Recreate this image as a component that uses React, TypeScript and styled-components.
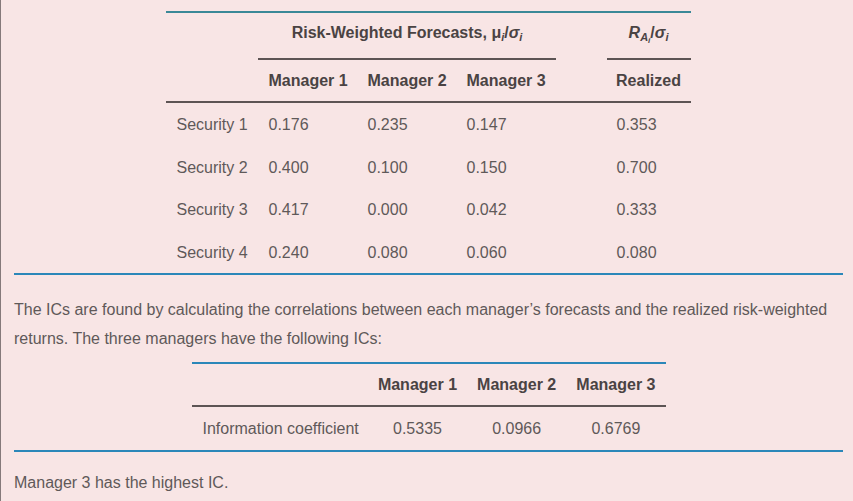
import styled, { createGlobalStyle } from "styled-components";

const GlobalStyle = createGlobalStyle`
  html, body {
    margin: 0;
    padding: 0;
    background: #f8e5e5;
  }
`;

const forecasts = [
  { label: "Security 1", values: ["0.176", "0.235", "0.147"], realized: "0.353" },
  { label: "Security 2", values: ["0.400", "0.100", "0.150"], realized: "0.700" },
  { label: "Security 3", values: ["0.417", "0.000", "0.042"], realized: "0.333" },
  { label: "Security 4", values: ["0.240", "0.080", "0.060"], realized: "0.080" },
];

const managers = ["Manager 1", "Manager 2", "Manager 3"];
const ics = ["0.5335", "0.0966", "0.6769"];

const App = () => {
  return (
    <Page>
      <GlobalStyle />
      <DataTable $width={524} $top="#3b8897">
        <colgroup>
          <col style={{ width: 92 }} />
          <col style={{ width: 99 }} />
          <col style={{ width: 99 }} />
          <col style={{ width: 99 }} />
          <col style={{ width: 51 }} />
          <col style={{ width: 84 }} />
        </colgroup>
        <thead>
          <tr>
            <GroupHead />
            <GroupHead colSpan={3} $underline>
              Risk-Weighted Forecasts, μ<Sub>i</Sub>/<Greek>σ</Greek>
              <Sub>i</Sub>
            </GroupHead>
            <GroupHead />
            <GroupHead $underline>
              <Greek>R</Greek>
              <Sub>
                A<SubSub>i</SubSub>
              </Sub>
              /<Greek>σ</Greek>
              <Sub>i</Sub>
            </GroupHead>
          </tr>
          <tr>
            <ColHead />
            {managers.map((m) => (
              <ColHead key={m}>{m}</ColHead>
            ))}
            <ColHead />
            <ColHead $center>Realized</ColHead>
          </tr>
        </thead>
        <tbody>
          {forecasts.map((row) => (
            <tr key={row.label}>
              <Cell>{row.label}</Cell>
              {row.values.map((v, i) => (
                <Cell key={i}>{v}</Cell>
              ))}
              <Cell />
              <Cell>{row.realized}</Cell>
            </tr>
          ))}
        </tbody>
      </DataTable>
      <Rule />
      <Para $top={20} $bottom={9}>
        The ICs are found by calculating the correlations between each manager’s forecasts
        and the realized risk-weighted returns. The three managers have the following ICs:
      </Para>
      <DataTable $width={474} $top="#2b87b9">
        <colgroup>
          <col style={{ width: 176 }} />
          <col style={{ width: 99 }} />
          <col style={{ width: 99 }} />
          <col style={{ width: 99 }} />
        </colgroup>
        <thead>
          <tr>
            <ColHead />
            {managers.map((m) => (
              <ColHead key={m} $center>
                {m}
              </ColHead>
            ))}
          </tr>
        </thead>
        <tbody>
          <tr>
            <Cell $padLeft={11}>Information coefficient</Cell>
            {ics.map((v) => (
              <Cell key={v} $center>
                {v}
              </Cell>
            ))}
          </tr>
        </tbody>
      </DataTable>
      <Rule />
      <Para $top={16} $bottom={0}>
        Manager 3 has the highest IC.
      </Para>
    </Page>
  );
};

export default App;

const Page = styled.div`
  min-height: 501px;
  box-sizing: border-box;
  padding: 11px 10px 0 13px;
  border-left: 1px solid #85797a;
  font-family: "Liberation Sans", Arial, sans-serif;
  font-size: 16px;
  color: #5f5959;
`;

const DataTable = styled.table<{ $width: number; $top: string }>`
  width: ${(p) => p.$width}px;
  margin: 0 auto;
  border-collapse: collapse;
  table-layout: fixed;
  border-top: 2px solid ${(p) => p.$top};

  thead tr:last-child th {
    border-bottom: 2px solid #5d5454;
  }
`;

const GroupHead = styled.th<{ $underline?: boolean }>`
  padding: 11px 0 16px;
  line-height: 18px;
  font-weight: bold;
  color: #4a4343;
  text-align: center;
  white-space: nowrap;
  border-bottom: 2px solid ${(p) => (p.$underline ? "#5d5454" : "transparent")};
`;

const ColHead = styled.th<{ $center?: boolean }>`
  padding: 12px 0 11px ${(p) => (p.$center ? 0 : 10)}px;
  line-height: 18px;
  font-weight: bold;
  color: #4a4343;
  text-align: ${(p) => (p.$center ? "center" : "left")};
  white-space: nowrap;
`;

const Cell = styled.td<{ $center?: boolean; $padLeft?: number }>`
  padding: 13px 0 11.5px ${(p) => (p.$center ? 0 : p.$padLeft ?? 10)}px;
  line-height: 18px;
  text-align: ${(p) => (p.$center ? "center" : "left")};
  white-space: nowrap;
`;

const Greek = styled.i`
  font-style: italic;
`;

const Sub = styled.sub`
  font-size: 11px;
  font-style: italic;
  line-height: 0;
  vertical-align: -3px;
`;

const SubSub = styled.span`
  font-size: 8px;
  vertical-align: -2px;
`;

const Rule = styled.hr`
  margin: 0;
  border: 0;
  height: 2px;
  background: #2b87b9;
`;

const Para = styled.p<{ $top: number; $bottom: number }>`
  margin: ${(p) => p.$top}px 0 ${(p) => p.$bottom}px;
  line-height: 29px;
`;
